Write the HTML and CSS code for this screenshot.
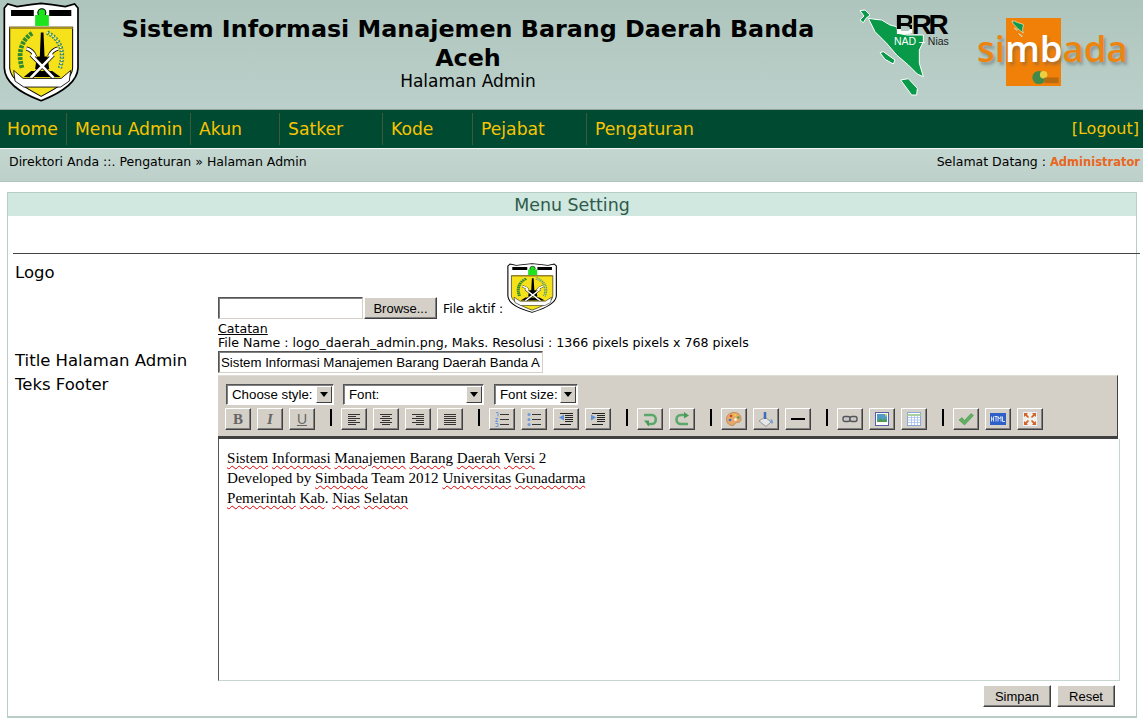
FILE: index.html
```html
<!DOCTYPE html>
<html lang="id">
<head>
    <meta charset="UTF-8">
    <meta name="viewport" content="width=device-width, initial-scale=1.0">
    <title>Sistem Informasi Manajemen Barang Daerah Banda Aceh</title>
    <link rel="stylesheet" href="styles.css">
</head>
<body>
    <svg class="defs" width="0" height="0">
        <defs>
            <symbol id="crest" viewBox="8 6 227 301" preserveAspectRatio="none">
                <path d="M12 24 L22 12 L50 20 L90 14 L122 10 L154 14 L194 20 L222 12 L232 24 L232 205 C230 250 180 280 122 303 C65 282 14 250 12 205 Z" fill="#fff" stroke="#000" stroke-width="5"/>
                <path d="M28 82 H216 V205 C214 240 170 265 122 290 C75 265 30 240 28 205 Z" fill="#f6e21a" stroke="#000" stroke-width="3"/>
                <path d="M32 30 H100 V48 H32 Z M146 30 H212 V48 H146 Z" fill="#000"/>
                <path d="M28 84 H216" stroke="#a8901a" stroke-width="7"/>
                <circle cx="124" cy="38" r="12" fill="#1ee41e" stroke="#000" stroke-width="3"/>
                <rect x="104" y="45" width="41" height="33" fill="#1ee41e"/>
                <path d="M95 100 C65 120 50 155 65 205" fill="none" stroke="#2f8a2f" stroke-width="14" stroke-dasharray="9 3"/>
                <path d="M140 98 C175 115 195 150 178 205" fill="none" stroke="#3c8a50" stroke-width="13" stroke-dasharray="6 4"/>
                <path d="M140 98 C175 115 195 150 178 205" fill="none" stroke="#fff" stroke-width="5" stroke-dasharray="3 7"/>
                <path d="M121 98 H129 L132 170 H141 L146 208 H104 L109 170 H118 Z" fill="#000"/>
                <path d="M70 232 L92 214 H155 L180 232 Z" fill="#000"/>
                <path d="M78 146 C92 150 100 160 104 170 M172 146 C158 150 150 160 146 170 M92 165 L160 235 M158 165 L90 235" fill="none" stroke="#000" stroke-width="12"/>
                <path d="M78 146 C92 150 100 160 104 170 M172 146 C158 150 150 160 146 170 M92 165 L160 235 M158 165 L90 235" fill="none" stroke="#fff" stroke-width="8"/>
                <path d="M40 212 L68 236 H182 L210 212 L206 244 L180 262 H70 L44 244 Z" fill="#fff" stroke="#000" stroke-width="2.500"/>
            </symbol>
            <symbol id="lines-left" viewBox="0 0 16 16"><path d="M2 3.500H14M2 5.500H10M2 7.500H14M2 9.500H10M2 11.500H14M2 13.500H10" stroke="#333" fill="none"/></symbol>
            <symbol id="lines-center" viewBox="0 0 16 16"><path d="M2 3.500H14M4 5.500H12M2 7.500H14M4 9.500H12M2 11.500H14M4 13.500H12" stroke="#333" fill="none"/></symbol>
            <symbol id="lines-right" viewBox="0 0 16 16"><path d="M2 3.500H14M6 5.500H14M2 7.500H14M6 9.500H14M2 11.500H14M6 13.500H14" stroke="#333" fill="none"/></symbol>
            <symbol id="lines-full" viewBox="0 0 16 16"><path d="M2 3.500H14M2 5.500H14M2 7.500H14M2 9.500H14M2 11.500H14M2 13.500H14" stroke="#333" fill="none"/></symbol>
            <symbol id="list-num" viewBox="0 0 16 16"><path d="M6 3.500H15M6 8.500H15M6 13.500H15" stroke="#333" fill="none"/><path d="M2 1.500H4V5.500M1.500 7.500H4L1.500 10.500H4M1.500 12.500H4V15.500H1.500" stroke="#6a9be0" fill="none"/></symbol>
            <symbol id="list-bullet" viewBox="0 0 16 16"><path d="M6 3.500H15M6 8.500H15M6 13.500H15" stroke="#333" fill="none"/><circle cx="3" cy="3.500" r="1.500" fill="#6a9be0"/><circle cx="3" cy="8.500" r="1.500" fill="#6a9be0"/><circle cx="3" cy="13.500" r="1.500" fill="#6a9be0"/></symbol>
            <symbol id="outdent" viewBox="0 0 16 16"><path d="M2 2.500H15M7 4.500H15M7 6.500H15M7 8.500H15M7 10.500H15M2 13.500H13" stroke="#222" fill="none"/><path d="M6 3.500V9.500L1 6.500Z" fill="#5c8fdc"/></symbol>
            <symbol id="indent" viewBox="0 0 16 16"><path d="M2 2.500H15M7 4.500H15M7 6.500H15M7 8.500H15M7 10.500H15M2 13.500H13" stroke="#222" fill="none"/><path d="M1 3.500V9.500L6 6.500Z" fill="#5c8fdc"/></symbol>
            <symbol id="undo" viewBox="0 0 16 16"><path d="M2 4H10C15 4 15 13 10 13H5" fill="none" stroke="#5aa86a" stroke-width="2.600"/><path d="M2 9.500L7 9.500L7 15.500Z" fill="#4a9a5a"/></symbol>
            <symbol id="redo" viewBox="0 0 16 16"><path d="M14 13H7C1 13 1 4 7 4H11" fill="none" stroke="#5aa86a" stroke-width="2.600"/><path d="M10 1L15 4.500L10 7.500Z" fill="#4a9a5a"/></symbol>
            <symbol id="palette" viewBox="0 0 16 16"><path d="M8 1.500C13 1.500 15.500 5 15 8.500C14.500 12 11 11 9.500 12C8.500 13 8 15 6 14.500C2 14 .5 11 .5 8C.5 4 4 1.500 8 1.500Z" fill="#e8a868" stroke="#b87a40" stroke-width=".7"/><circle cx="5" cy="5" r="1.300" fill="#d04030"/><circle cx="9" cy="4" r="1.300" fill="#e8d040"/><circle cx="12.300" cy="6.500" r="1.300" fill="#50a050"/><circle cx="4" cy="9" r="1.300" fill="#4070c0"/><circle cx="9.500" cy="8.500" r="1.300" fill="#fff"/></symbol>
            <symbol id="bucket" viewBox="0 0 16 16"><path d="M1 10L7 6L13 11L8 15.500Z" fill="#e6e6e6" stroke="#888" stroke-width=".8"/><path d="M7 1V8" stroke="#3b6fb5" stroke-width="2.500"/><path d="M12.500 8C15.500 9 15.500 12 14 13L12.500 11Z" fill="#6fa3d8"/></symbol>
            <symbol id="rule" viewBox="0 0 16 16"><path d="M1 8H15" stroke="#000" stroke-width="2"/></symbol>
            <symbol id="link" viewBox="0 0 16 16"><rect x="1" y="5.500" width="7" height="5" rx="2" fill="#c8c8c8" stroke="#555" stroke-width="1.400"/><rect x="8" y="5.500" width="7" height="5" rx="2" fill="#c8c8c8" stroke="#555" stroke-width="1.400"/></symbol>
            <symbol id="image" viewBox="0 0 16 16"><rect x="1.500" y="1.500" width="13" height="13" fill="#fff" stroke="#5560a8"/><rect x="3" y="3" width="10" height="8" fill="#4f9ac8"/><path d="M3 11L6 7L9 9L11 7.500L13 11Z" fill="#4f9a50"/><path d="M11 3.500H13M12 2.500V5.500" stroke="#f4e040"/></symbol>
            <symbol id="table" viewBox="0 0 16 16"><rect x="1.500" y="1.500" width="13" height="13" fill="#fff" stroke="#8aa8d8"/><path d="M1.500 4H14.500" stroke="#a8d0a0" stroke-width="2"/><path d="M2 6.500H14M2 9H14M2 11.500H14M5.500 5V14M8.500 5V14M11.500 5V14" stroke="#9ab8e8" stroke-width=".7"/></symbol>
            <symbol id="check" viewBox="0 0 16 16"><path d="M1 9L4 6.500L6.500 9.500L13 2.500L15.500 4.500L6.500 14Z" fill="#5fb060" stroke="#3f8f46" stroke-width=".5"/></symbol>
            <symbol id="html" viewBox="0 0 16 16"><rect x="0" y="2" width="16" height="12" fill="#2d5fc8"/><path d="M1.500 5.500V10.500M3.500 5.500V10.500M1.500 8H3.500M4.500 5.500H7.500M6 5.500V10.500M8 10.500V5.500L9.500 8L11 5.500V10.500M12.500 5.500V10.500H15" fill="none" stroke="#fff" stroke-width=".8"/></symbol>
            <symbol id="fullscreen" viewBox="0 0 16 16"><rect x=".5" y=".5" width="15" height="15" fill="#f2f0ea" stroke="#c8c8d8" stroke-dasharray="2 1"/><path d="M2 2H6L4.800 3.300L7 6L6 7L3.300 4.800L2 6ZM14 2V6L12.700 4.800L10 7L9 6L11.200 3.300L10 2ZM2 14V10L3.300 11.200L6 9L7 10L4.800 12.700L6 14ZM14 14H10L11.200 12.700L9 10L10 9L12.700 11.200L14 10Z" fill="#d0642c"/></symbol>
        </defs>
    </svg>

    <header class="top">
        <svg class="crest crest-big"><use href="#crest"/></svg>
        <div class="top-title">
            <h1>Sistem Informasi Manajemen Barang Daerah Banda Aceh</h1>
            <p>Halaman Admin</p>
        </div>
        <div class="brr">
            <svg class="brr-map" viewBox="0 0 303 300">
                <path d="M85 55 L105 58 L125 60 L150 75 L170 80 L175 100 L200 105 L250 105 L250 125 L238 150 L238 190 L250 230 L232 222 L205 195 L170 165 L140 130 L105 95 Z M60 32 L75 30 L90 45 L78 55 L70 68 L60 60 L72 48 Z M120 158 L130 155 L165 180 L160 192 L135 178 Z M182 240 L205 236 L232 265 L230 285 L215 285 Z" fill="#089a49" stroke="#fff" stroke-width="3"/>
            </svg>
            <div class="brr-word"><span>B</span>RR</div>
            <div class="brr-sub"><span>NAD &#8211;</span> Nias</div>
        </div>
        <div class="simbada">
            <div class="simbada-box">
                <svg class="simbada-map" viewBox="0 0 303 300"><path d="M85 55 L125 60 L170 80 L250 105 L238 190 L250 230 L170 165 L105 95 Z M120 158 L165 180 L160 192 Z M182 240 L232 265 L230 285 Z" fill="#089a49" stroke="#fff" stroke-width="8"/></svg>
                <svg class="simbada-seal" viewBox="0 0 30 16"><circle cx="8" cy="8" r="7" fill="#3f8a4a"/><circle cx="13" cy="5" r="4" fill="#e8d040"/><path d="M14 8H29V14H14Z" fill="#b86a10"/></svg>
            </div>
            <div class="simbada-word">si<span>mb</span>ada</div>
        </div>
    </header>

    <nav class="menu">
        <a class="w1" href="#">Home</a>
        <a class="w2" href="#">Menu Admin</a>
        <a class="w3" href="#">Akun</a>
        <a class="w3 w3b" href="#">Satker</a>
        <a class="w4" href="#">Kode</a>
        <a class="w5" href="#">Pejabat</a>
        <a class="w6" href="#">Pengaturan</a>
        <a class="logout" href="#">[Logout]</a>
    </nav>

    <div class="crumb">
        <span>Direktori Anda ::. Pengaturan &#187; Halaman Admin</span>
        <span>Selamat Datang : <b>Administrator</b></span>
    </div>

    <main class="panel">
        <h2>Menu Setting</h2>
        <hr>
        <div class="row row-logo">
            <div class="lbl">Logo</div>
            <div>
                <div class="upload">
                    <input class="file-path" type="text">
                    <button class="btn btn-browse" type="button">Browse...</button>
                    <span class="aktif">File aktif :</span>
                    <svg class="crest crest-small"><use href="#crest"/></svg>
                </div>
                <div class="note"><u>Catatan</u><br>File Name : logo_daerah_admin.png, Maks. Resolusi : 1366 pixels pixels x 768 pixels</div>
            </div>
        </div>
        <div class="row row-title">
            <div class="lbl">Title Halaman Admin</div>
            <input class="title-input" type="text" value="Sistem Informasi Manajemen Barang Daerah Banda Aceh">
        </div>
        <div class="row row-footer">
            <div class="lbl">Teks Footer</div>
            <div class="editor">
                <div class="toolbar">
                    <div class="tool-row">
                        <div class="pick pick-style"><span>Choose style:</span><i></i></div>
                        <div class="pick pick-font"><span>Font:</span><i></i></div>
                        <div class="pick pick-size"><span>Font size:</span><i></i></div>
                    </div>
                    <div class="tool-row tool-icons">
                        <button class="tb" type="button"><b class="tb-b">B</b></button>
                        <button class="tb" type="button"><b class="tb-i">I</b></button>
                        <button class="tb" type="button"><b class="tb-u">U</b></button>
                        <span class="sep"></span>
                        <button class="tb" type="button"><svg><use href="#lines-left"/></svg></button>
                        <button class="tb" type="button"><svg><use href="#lines-center"/></svg></button>
                        <button class="tb" type="button"><svg><use href="#lines-right"/></svg></button>
                        <button class="tb" type="button"><svg><use href="#lines-full"/></svg></button>
                        <span class="sep"></span>
                        <button class="tb" type="button"><svg><use href="#list-num"/></svg></button>
                        <button class="tb" type="button"><svg><use href="#list-bullet"/></svg></button>
                        <button class="tb" type="button"><svg><use href="#outdent"/></svg></button>
                        <button class="tb" type="button"><svg><use href="#indent"/></svg></button>
                        <span class="sep"></span>
                        <button class="tb" type="button"><svg><use href="#undo"/></svg></button>
                        <button class="tb" type="button"><svg><use href="#redo"/></svg></button>
                        <span class="sep"></span>
                        <button class="tb" type="button"><svg><use href="#palette"/></svg></button>
                        <button class="tb" type="button"><svg><use href="#bucket"/></svg></button>
                        <button class="tb" type="button"><svg><use href="#rule"/></svg></button>
                        <span class="sep"></span>
                        <button class="tb" type="button"><svg><use href="#link"/></svg></button>
                        <button class="tb" type="button"><svg><use href="#image"/></svg></button>
                        <button class="tb" type="button"><svg><use href="#table"/></svg></button>
                        <span class="sep"></span>
                        <button class="tb" type="button"><svg><use href="#check"/></svg></button>
                        <button class="tb" type="button"><svg><use href="#html"/></svg></button>
                        <button class="tb" type="button"><svg><use href="#fullscreen"/></svg></button>
                    </div>
                </div>
                <div class="edit-area">
                    <p><span class="typo">Sistem</span> <span class="typo">Informasi</span> <span class="typo">Manajemen</span> <span class="typo">Barang</span> <span class="typo">Daerah</span> <span class="typo">Versi</span> 2</p>
                    <p>Developed by <span class="typo">Simbada</span> Team 2012 <span class="typo">Universitas</span> <span class="typo">Gunadarma</span></p>
                    <p><span class="typo">Pemerintah</span> <span class="typo">Kab</span>. <span class="typo">Nias</span> <span class="typo">Selatan</span></p>
                </div>
            </div>
        </div>
        <div class="actions">
            <button class="btn btn-save" type="button">Simpan</button>
            <button class="btn btn-reset" type="button">Reset</button>
        </div>
    </main>
</body>
</html>
```

FILE: styles.css
```css
body {
    margin: 0;
    font-family: "DejaVu Sans", Verdana, sans-serif;
    background: #fff;
    color: #000;
    overflow: hidden;
}
.defs {
    position: absolute;
}

/* header */
.top {
    height: 109px;
    display: flex;
    background: linear-gradient(#aec5bd, #bbd0ca);
    border-bottom: 1px solid #8fa59e;
}
.crest {
    display: block;
}
.crest-big {
    width: 76px;
    height: 100px;
    margin: 2px 0 0 3px;
}
.top-title {
    width: 716px;
    margin-left: 31px;
    text-align: center;
}
.top-title h1 {
    margin: 15px 0 0;
    font-size: 23.800px;
    line-height: 29px;
    font-weight: bold;
}
.top-title p {
    margin: 0;
    font-size: 17px;
    line-height: 17px;
}
.brr {
    position: relative;
    width: 101px;
    margin-left: 14px;
}
.brr-map {
    display: block;
    width: 101px;
    height: 100px;
}
.brr-word {
    position: absolute;
    left: 55px;
    top: 14px;
    font-family: "Liberation Sans", Arial, sans-serif;
    font-size: 28px;
    line-height: 22px;
    font-weight: bold;
    letter-spacing: -3.500px;
}
.brr-word span {
    background: linear-gradient(#000 66%, #fff 66%);
    -webkit-background-clip: text;
    background-clip: text;
    color: transparent;
}
.brr-sub {
    position: absolute;
    left: 54px;
    top: 36px;
    font-family: "Liberation Sans", Arial, sans-serif;
    font-size: 10.500px;
    line-height: 11px;
    white-space: nowrap;
    color: #222;
}
.brr-sub span {
    color: #fff;
}
.simbada {
    position: relative;
    flex: 1;
}
.simbada-box {
    position: absolute;
    left: 65px;
    top: 18px;
    width: 55px;
    height: 68px;
    background: #f08008;
}
.simbada-map {
    position: absolute;
    left: 0;
    top: -1px;
    width: 21px;
    height: 21px;
}
.simbada-seal {
    position: absolute;
    right: 1px;
    bottom: 1px;
    width: 29px;
    height: 15px;
}
.simbada-word {
    position: absolute;
    left: 36px;
    top: 24px;
    font-family: "Open Sans", sans-serif;
    font-size: 36.500px;
    font-weight: 600;
    line-height: 48px;
    color: #ee8410;
    text-shadow: 2px 3px 3px rgba(90, 90, 90, .45);
}
.simbada-word span {
    color: #fff;
}

/* menu */
.menu {
    height: 38px;
    display: flex;
    align-items: center;
    background: #004a32;
    border-bottom: 1px solid #f2f6f4;
    font-size: 17.200px;
}
.menu a {
    color: #f9c400;
    text-decoration: none;
    height: 32px;
    line-height: 32px;
    padding-left: 8px;
    box-sizing: border-box;
    border-right: 1px solid #3d5a3a;
}
.menu .w1 { width: 67px; padding-left: 7px; }
.menu .w2 { width: 124px; }
.menu .w3 { width: 89px; }
.menu .w3b { width: 103px; }
.menu .w4 { width: 90px; }
.menu .w5 { width: 114px; }
.menu .w6 { width: 140px; border-right: 0; }
.menu .logout {
    margin-left: auto;
    padding: 0 4px 0 0;
    border-right: 0;
    font-size: 16px;
}

.crumb {
    height: 33px;
    box-sizing: border-box;
    padding: 5px 3px 0 9px;
    display: flex;
    justify-content: space-between;
    background: linear-gradient(#c3d6d0, #bdd0ca);
    border-bottom: 1px solid #b0c4bd;
    font-size: 12.500px;
    line-height: 15px;
}
.crumb b {
    color: #e9661f;
    font-size: 11.500px;
}

/* panel */
.panel {
    height: 523px;
    margin: 10px 6px 0 7px;
    border: 1px solid #b7cdc5;
    border-bottom-width: 2px;
}
.panel h2 {
    margin: 0;
    height: 23px;
    background: #d0e8e0;
    font-size: 17.400px;
    line-height: 24px;
    font-weight: normal;
    text-align: center;
    color: #2f5a4b;
}
.panel hr {
    margin: 37px -4px 0 5px;
    height: 1px;
    border: 0;
    background: #444;
}
.row {
    display: grid;
    grid-template-columns: 203px 1fr;
    padding-left: 7px;
}
.lbl {
    font-size: 16.500px;
    line-height: 20px;
}
.row-logo {
    padding-top: 8px;
}
.row-logo .lbl {
    margin-top: 1px;
}
.upload {
    display: flex;
    align-items: flex-end;
    height: 57px;
    font-size: 12.400px;
}
.file-path {
    width: 145px;
    height: 22px;
    box-sizing: border-box;
    border: 1px solid;
    border-color: #555 #d4d0c8 #d4d0c8 #555;
    box-shadow: inset 1px 1px 0 #808080;
    padding: 0 2px;
    margin: 0 1px 0 0;
    background: #fff;
}
.btn {
    font-family: "Liberation Sans", Arial, sans-serif;
    font-size: 13px;
    height: 22px;
    padding: 0;
    background: #d4d0c8;
    color: #000;
    border: 1px solid;
    border-color: #fff #404040 #404040 #fff;
    box-shadow: inset -1px -1px 0 #808080;
}
.btn-browse {
    width: 73px;
}
.aktif {
    margin: 0 4px 0 6px;
    line-height: 20px;
}
.crest-small {
    width: 50px;
    height: 50px;
    margin-bottom: 6px;
}
.note {
    margin-top: 3px;
    font-size: 12.600px;
    line-height: 14px;
}
.row-title {
    margin-top: 1px;
    align-items: center;
}
.row-title .lbl {
    padding-bottom: 2px;
}
.title-input {
    width: 325px;
    height: 22px;
    box-sizing: border-box;
    border: 1px solid;
    border-color: #555 #d4d0c8 #d4d0c8 #555;
    box-shadow: inset 1px 1px 0 #808080;
    padding: 0 2px;
    margin: 0;
    font-family: "Liberation Sans", Arial, sans-serif;
    font-size: 13.250px;
    color: #000;
}
.row-footer {
    margin-top: 2px;
}

/* editor */
.editor {
    width: 902px;
}
.toolbar {
    width: 900px;
    height: 64px;
    box-sizing: border-box;
    padding: 8px 0 0 8px;
    background: #d4d0c8;
    border-top: 1px solid #e0ddd6;
    border-right: 1px solid #404040;
    border-bottom: 3px solid #404040;
}
.tool-row {
    display: flex;
}
.pick {
    height: 21px;
    box-sizing: border-box;
    display: flex;
    justify-content: space-between;
    align-items: center;
    margin-right: 9px;
    background: #fff;
    border: 1px solid;
    border-color: #555 #fff #fff #555;
    box-shadow: inset 1px 1px 0 #808080;
    font-family: "Liberation Sans", Arial, sans-serif;
    font-size: 13.300px;
    white-space: nowrap;
    padding-left: 5px;
}
.pick i {
    position: relative;
    flex: none;
    width: 16px;
    height: 17px;
    margin-right: 1px;
    background: #d4d0c8;
    border: 1px solid;
    border-color: #fff #404040 #404040 #fff;
    box-sizing: border-box;
}
.pick i::after {
    content: "";
    position: absolute;
    left: 3px;
    top: 5px;
    border: 4px solid transparent;
    border-top: 5px solid #000;
    border-bottom: 0;
}
.pick-style { width: 108px; }
.pick-font { width: 141px; margin-right: 10px; }
.pick-size { width: 84px; }
.tool-icons {
    gap: 6px;
    margin: 3px 0 0 -1px;
}
.tb {
    width: 26px;
    height: 22px;
    padding: 0;
    background: #d4d0c8;
    border: 1px solid;
    border-color: #fff #404040 #404040 #fff;
    box-shadow: inset -1px -1px 0 #808080;
    display: flex;
    align-items: center;
    justify-content: center;
}
.tb svg {
    width: 16px;
    height: 16px;
}
.tb b {
    font-family: "Liberation Serif", serif;
    font-size: 15px;
    line-height: 16px;
    color: #666;
}
.tb .tb-i {
    font-style: italic;
}
.tb .tb-u {
    font-family: "Liberation Sans", Arial, sans-serif;
    font-weight: normal;
    text-decoration: underline;
    font-size: 14px;
}
.sep {
    width: 2px;
    height: 17px;
    margin: 1px 3px 0 9px;
    background: #000;
}
.edit-area {
    height: 242px;
    box-sizing: border-box;
    padding: 9px 8px;
    border-left: 1px solid #555;
    border-right: 1px solid #c8d6d0;
    border-bottom: 1px solid #c8d6d0;
    font-family: "Liberation Serif", "Times New Roman", serif;
    font-size: 15.100px;
    line-height: 20px;
}
.edit-area p {
    margin: 0;
}
.typo {
    text-decoration: underline wavy #e00000 1px;
    text-underline-offset: 2px;
}
.actions {
    display: flex;
    justify-content: flex-end;
    gap: 6px;
    margin: 4px 21px 0 0;
}
.btn-save {
    width: 68px;
}
.btn-reset {
    width: 58px;
}
```
